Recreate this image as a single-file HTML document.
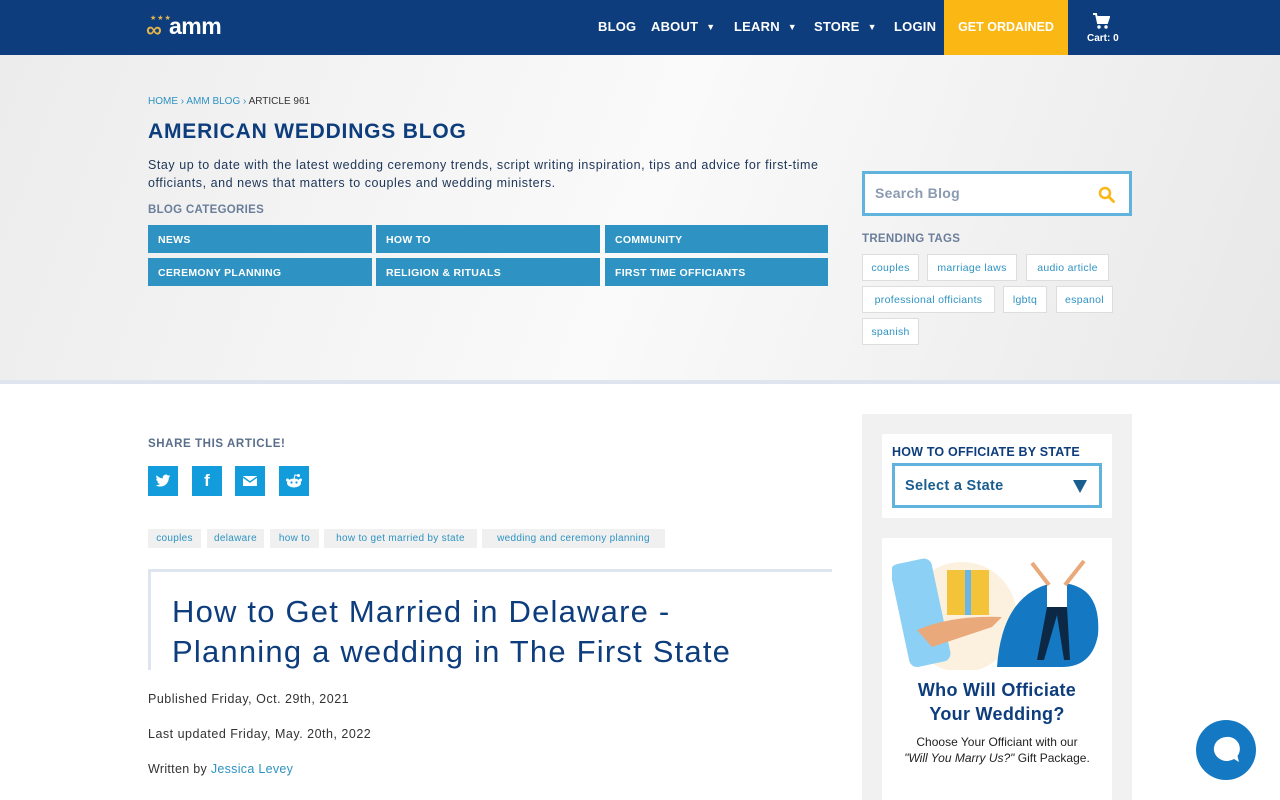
<!DOCTYPE html>
<html><head><meta charset="utf-8"><style>
*{box-sizing:border-box;margin:0;padding:0}
body{width:1280px;height:800px;overflow:hidden;font-family:"Liberation Sans",sans-serif;background:#fff;position:relative}
.abs{position:absolute}
header{position:absolute;left:0;top:0;width:1280px;height:55px;background:#0d3d7d;box-shadow:0 2px 4px rgba(0,0,0,.3)}
.nav{position:absolute;top:19px;color:#fff;font-size:13px;font-weight:bold;letter-spacing:.2px}
.nav i{font-style:normal;font-size:9px;margin-left:8px;vertical-align:1px}
.hero{position:absolute;top:55px;left:0;width:1280px;height:326px;background:linear-gradient(110deg,#ececec,#fafafa 50%,#e8e8e8)}
.cat{position:absolute;width:224px;height:28px;background:#2e93c2;color:#fff;font-size:10.5px;font-weight:bold;padding:9px 10px;letter-spacing:.3px}
.tt{position:absolute;height:27px;border:1px solid #ddd;background:#fff;color:#2e93c2;font-size:10.5px;padding:7px 0;text-align:center;letter-spacing:.3px}
.sh{position:absolute;top:466px;width:30px;height:30px;background:#139cdb;color:#fff;text-align:center;font-weight:bold;font-size:17px;line-height:30px}
.sh svg{position:absolute;left:7px;top:7px}
.tg{position:absolute;top:529px;height:19px;background:#f0f0f0;color:#2e93c2;font-size:10px;padding:4px 0;text-align:center;letter-spacing:.3px}
</style></head><body>
<header>
<div class="abs" style="left:150px;top:14px;color:#e8b84b;font-size:7px;letter-spacing:1px">★★★</div>
<div class="abs" style="left:146px;top:17px;color:#e3b34a;font-size:22px;font-weight:bold">∞</div>
<div class="abs" style="left:169px;top:13px;color:#fff;font-size:23px;font-weight:bold;letter-spacing:-.5px">amm</div>
<div class="nav" style="left:598px">BLOG</div>
<div class="nav" style="left:651px">ABOUT<i>▼</i></div>
<div class="nav" style="left:734px">LEARN<i>▼</i></div>
<div class="nav" style="left:814px">STORE<i>▼</i></div>
<div class="nav" style="left:894px">LOGIN</div>
<div class="abs" style="left:944px;top:0;width:124px;height:55px;background:#fbb713;color:#fff;font-size:12.5px;font-weight:bold;text-align:center;line-height:54px">GET ORDAINED</div>
<svg class="abs" style="left:1092px;top:12px" width="18" height="18" viewBox="0 0 18 18"><path d="M1 2h3l2 9h9l2-6H5" fill="none" stroke="#fff" stroke-width="2"/><path d="M5 5h12l-2 6H6z" fill="#fff"/><circle cx="7" cy="15" r="1.7" fill="#fff"/><circle cx="14" cy="15" r="1.7" fill="#fff"/></svg>
<div class="abs" style="left:1087px;top:33px;color:#fff;font-size:10px;font-weight:bold">Cart: 0</div>
</header>
<div class="hero"></div>
<div class="abs" style="left:0;top:380px;width:1280px;height:4px;background:#dfe5ee"></div>
<div class="abs" style="left:148px;top:96px;font-size:10px;color:#2e93c2">HOME › AMM BLOG › <span style="color:#333">ARTICLE 961</span></div>
<div class="abs" style="left:148px;top:120px;font-size:21px;font-weight:bold;color:#0d3d7d;letter-spacing:.8px">AMERICAN WEDDINGS BLOG</div>
<div class="abs" style="left:148px;top:156px;width:720px;font-size:12.5px;line-height:18px;color:#1d3557;letter-spacing:.55px;white-space:nowrap">Stay up to date with the latest wedding ceremony trends, script writing inspiration, tips and advice for first-time<br>officiants, and news that matters to couples and wedding ministers.</div>
<div class="abs" style="left:148px;top:204px;font-size:11.5px;font-weight:bold;color:#6a7e9a;letter-spacing:.3px">BLOG CATEGORIES</div>
<div class="cat" style="left:148px;top:225px">NEWS</div>
<div class="cat" style="left:376px;top:225px">HOW TO</div>
<div class="cat" style="left:605px;top:225px;width:223px">COMMUNITY</div>
<div class="cat" style="left:148px;top:258px">CEREMONY PLANNING</div>
<div class="cat" style="left:376px;top:258px">RELIGION &amp; RITUALS</div>
<div class="cat" style="left:605px;top:258px;width:223px">FIRST TIME OFFICIANTS</div>
<div class="abs" style="left:862px;top:171px;width:270px;height:45px;border:3px solid #5fb3dc;background:#fff;font-size:14px;color:#8a9ab0;padding:11px 10px;font-weight:bold;letter-spacing:.3px">Search Blog<svg style="position:absolute;right:14px;top:12px" width="17" height="17" viewBox="0 0 17 17"><circle cx="7" cy="7" r="5" fill="none" stroke="#fbb713" stroke-width="2.5"/><path d="M10.5 10.5l5 5" stroke="#fbb713" stroke-width="2.8" stroke-linecap="round"/></svg></div>
<div class="abs" style="left:862px;top:233px;font-size:11.5px;font-weight:bold;color:#6a7e9a;letter-spacing:.3px">TRENDING TAGS</div>
<div class="tt" style="left:862px;top:254px;width:57px">couples</div>
<div class="tt" style="left:927px;top:254px;width:90px">marriage laws</div>
<div class="tt" style="left:1026px;top:254px;width:83px">audio article</div>
<div class="tt" style="left:862px;top:286px;width:133px">professional officiants</div>
<div class="tt" style="left:1003px;top:286px;width:44px">lgbtq</div>
<div class="tt" style="left:1056px;top:286px;width:57px">espanol</div>
<div class="tt" style="left:862px;top:318px;width:57px">spanish</div>

<div class="abs" style="left:148px;top:438px;font-size:11.5px;font-weight:bold;color:#5a6e8a;letter-spacing:.6px">SHARE THIS ARTICLE!</div>
<div class="sh" style="left:148px"><svg width="16" height="16" viewBox="0 0 24 24"><path fill="#fff" d="M23 4.6a9 9 0 0 1-2.6.7 4.6 4.6 0 0 0 2-2.5 9 9 0 0 1-2.9 1.1 4.5 4.5 0 0 0-7.7 4.1A12.8 12.8 0 0 1 2.5 3.3a4.5 4.5 0 0 0 1.4 6 4.5 4.5 0 0 1-2-.6 4.5 4.5 0 0 0 3.6 4.5 4.5 4.5 0 0 1-2 .1 4.5 4.5 0 0 0 4.2 3.1A9 9 0 0 1 1 18.300 12.8 12.8 0 0 0 7.9 20.3c8.3 0 12.8-6.9 12.8-12.8v-.6A9 9 0 0 0 23 4.6z"/></svg></div>
<div class="sh" style="left:192px">f</div>
<div class="sh" style="left:235px"><svg width="16" height="16" viewBox="0 0 16 16"><rect x="1" y="3" width="14" height="10" fill="#fff"/><path d="M1 4l7 5 7-5" fill="none" stroke="#139cdb" stroke-width="1.4"/></svg></div>
<div class="sh" style="left:279px"><svg width="16" height="16" viewBox="0 0 16 16"><ellipse cx="8" cy="10" rx="7" ry="4.5" fill="#fff"/><circle cx="12.5" cy="2.5" r="1.5" fill="#fff"/><path d="M8 6l1-4 3 .5" stroke="#fff" fill="none"/><circle cx="5.5" cy="9.5" r="1.1" fill="#139cdb"/><circle cx="10.5" cy="9.5" r="1.1" fill="#139cdb"/><circle cx="1.5" cy="7" r="1.5" fill="#fff"/><circle cx="14.5" cy="7" r="1.5" fill="#fff"/></svg></div>
<div class="tg" style="left:148px;width:53px">couples</div>
<div class="tg" style="left:207px;width:57px">delaware</div>
<div class="tg" style="left:270px;width:49px">how to</div>
<div class="tg" style="left:324px;width:153px">how to get married by state</div>
<div class="tg" style="left:482px;width:183px">wedding and ceremony planning</div>
<div class="abs" style="left:148px;top:569px;width:684px;height:3px;background:#dfe5ee"></div>
<div class="abs" style="left:148px;top:569px;width:3px;height:101px;background:#dfe5ee"></div>
<div class="abs" style="left:172px;top:592px;font-size:31px;line-height:40px;color:#0d3d7d;letter-spacing:1.2px;white-space:nowrap">How to Get Married in Delaware -<br>Planning a wedding in The First State</div>
<div class="abs" style="left:148px;top:692px;font-size:12.5px;color:#333;letter-spacing:.5px">Published Friday, Oct. 29th, 2021</div>
<div class="abs" style="left:148px;top:727px;font-size:12.5px;color:#333;letter-spacing:.5px">Last updated Friday, May. 20th, 2022</div>
<div class="abs" style="left:148px;top:762px;font-size:12.5px;color:#333;letter-spacing:.3px">Written by <span style="color:#2e93c2">Jessica Levey</span></div>

<div class="abs" style="left:862px;top:414px;width:270px;height:386px;background:#f1f1f1"></div>
<div class="abs" style="left:882px;top:434px;width:230px;height:84px;background:#fff"></div>
<div class="abs" style="left:892px;top:445px;font-size:12.5px;font-weight:bold;color:#0d3d7d;letter-spacing:.2px">HOW TO OFFICIATE BY STATE</div>
<div class="abs" style="left:892px;top:463px;width:210px;height:45px;border:3px solid #5fb3dc;background:#fff;font-size:14.5px;font-weight:bold;color:#1a5d8f;padding:12px 10px;letter-spacing:.3px">Select a State<svg style="position:absolute;right:12px;top:14px" width="14" height="13"><path d="M0 0h14L7 13z" fill="#1a5d8f"/></svg></div>
<div class="abs" style="left:882px;top:538px;width:230px;height:262px;background:#fff"></div>
<svg class="abs" style="left:892px;top:555px" width="210" height="115">
<circle cx="70" cy="62" r="55" fill="#fcf1de"/>
<path d="M105 112 Q110 40 160 28 Q210 25 206 80 Q200 112 170 112Z" fill="#1479c2"/>
<rect x="8" y="5" width="42" height="105" rx="8" fill="#8cd0f5" transform="rotate(-12 30 60)"/>
<rect x="55" y="15" width="42" height="45" fill="#f3c33a"/>
<rect x="73" y="15" width="6" height="45" fill="#6ab6e8"/>
<path d="M25 75 Q60 60 110 62 L100 72 Q70 82 40 92Z" fill="#eaa97a"/>
<rect x="155" y="25" width="20" height="30" fill="#fff"/>
<path d="M155 52 L145 105 L152 105 L165 60 L172 105 L178 105 L175 52Z" fill="#0d2844"/>
<path d="M157 30 L140 8 M173 30 L192 6" stroke="#eaa97a" stroke-width="4"/>
</svg>
<div class="abs" style="left:882px;top:678px;width:230px;text-align:center;font-size:18px;line-height:24px;font-weight:bold;color:#0d3d7d;letter-spacing:.3px">Who Will Officiate<br>Your Wedding?</div>
<div class="abs" style="left:882px;top:734px;width:230px;text-align:center;font-size:12px;line-height:16px;color:#222">Choose Your Officiant with our<br><i>"Will You Marry Us?"</i> Gift Package.</div>
<div class="abs" style="left:1196px;top:720px;width:60px;height:60px;border-radius:50%;background:#1479c2"></div>
<svg class="abs" style="left:1210px;top:734px" width="32" height="32" viewBox="0 0 32 32"><path d="M16 3a13 12 0 1 0 8 22l5 3-1.5-6A12 12 0 0 0 16 3z" fill="#fff"/></svg>
</body></html>
